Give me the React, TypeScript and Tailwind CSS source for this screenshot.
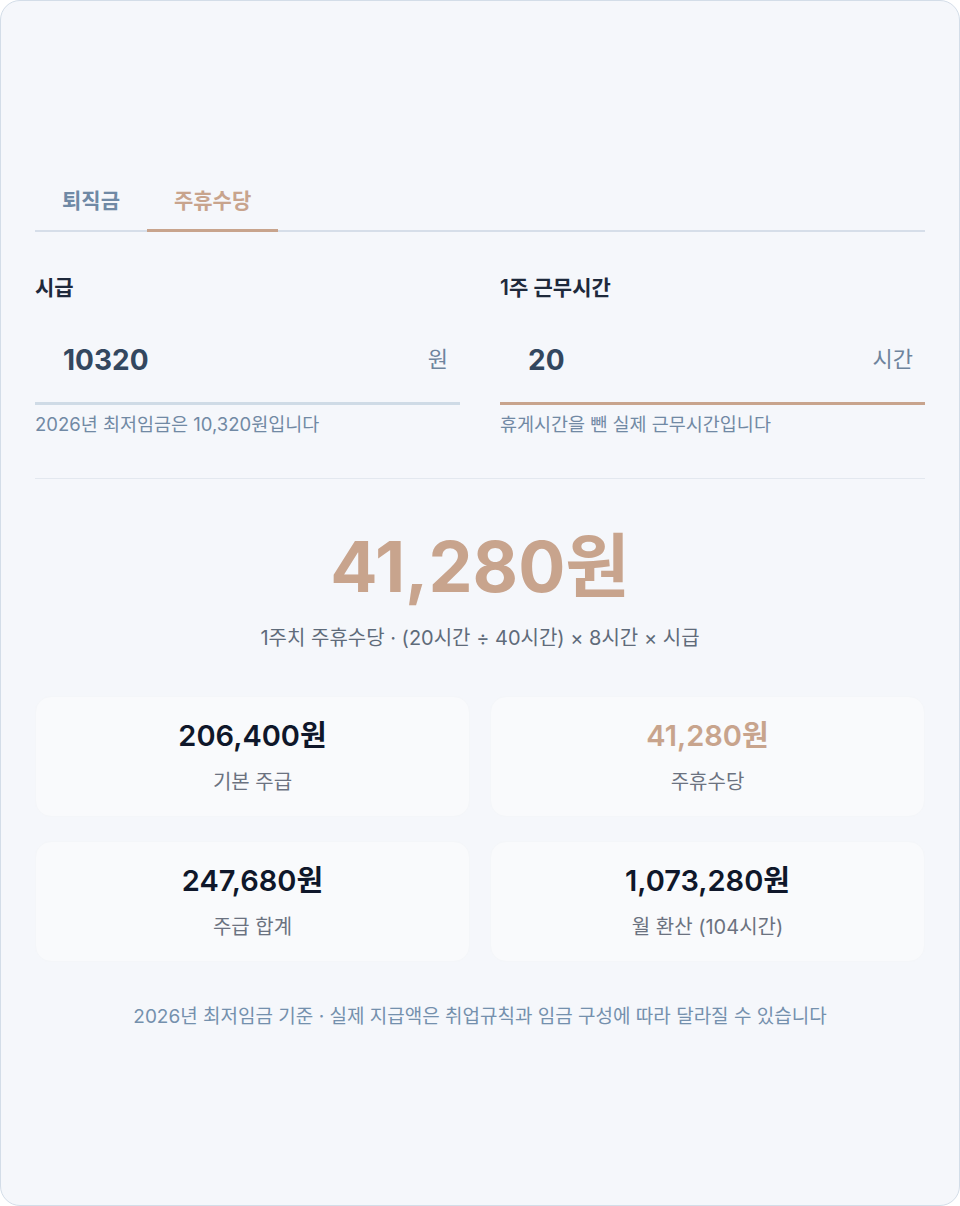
import { useState } from "react";

const font = { fontFamily: "Inter, 'Noto Sans CJK KR', sans-serif" };

function Field({
  label,
  value,
  unit,
  hint,
  active,
}: {
  label: string;
  value: string;
  unit: string;
  hint: string;
  active?: boolean;
}) {
  return (
    <div className="flex flex-col">
      <div className="text-[21px] font-semibold leading-7 text-[#1e293b]">{label}</div>
      <div
        className={`mt-[21px] flex h-[82px] items-center justify-between border-b-[3px] pb-[6px] pl-7 pr-3 ${active ? "border-[#c8a48d]" : "border-[#cfdbe6]"}`}
      >
        <span className="text-[28px] font-bold text-[#33475f]">{value}</span>
        <span className="text-[22px] text-[#6e849d]">{unit}</span>
      </div>
      <div className="mt-[6px] text-[18.5px] leading-[26px] text-[#7189a4]">{hint}</div>
    </div>
  );
}

function Stat({ value, label, accent }: { value: string; label: string; accent?: boolean }) {
  return (
    <div className="flex h-[121px] flex-col items-center justify-center rounded-2xl border border-[#f4f6f9] bg-[#f9fafc]">
      <div className={`text-[29px] font-semibold leading-9 ${accent ? "text-[#c8a48d]" : "text-[#0f172a]"}`}>
        {value}
      </div>
      <div className="mt-[14px] text-[20px] leading-7 text-[#6b7280]">{label}</div>
    </div>
  );
}

export default function App() {
  const [tab, setTab] = useState(1);
  const tabs = ["퇴직금", "주휴수당"];

  return (
    <div style={font} className="h-[1206px] w-[960px] bg-white">
      <div className="h-full w-full rounded-[20px] border border-[#d3dde8] bg-[#f5f7fb] px-[34px] pt-[184px]">
        <div className="flex border-b-2 border-[#d6dee9]">
          {tabs.map((t, i) => (
            <button
              key={t}
              onClick={() => setTab(i)}
              className={`-mb-[2px] border-b-[3px] px-[27px] pb-[12px] text-[21px] font-semibold leading-8 ${tab === i ? "border-[#c8a48d] text-[#c8a48d]" : "border-transparent text-[#6f89a5]"}`}
            >
              {t}
            </button>
          ))}
        </div>

        <div className="mt-[42px] grid grid-cols-2 gap-10">
          <Field label="시급" value="10320" unit="원" hint="2026년 최저임금은 10,320원입니다" />
          <Field
            label="1주 근무시간"
            value="20"
            unit="시간"
            hint="휴게시간을 뺀 실제 근무시간입니다"
            active
          />
        </div>

        <div className="mt-[41px] border-t border-[#e3e8ef]" />

        <div className="mt-[44px] flex flex-col items-center">
          <div className="text-[70px] font-bold leading-[88px] text-[#c8a48d]">41,280원</div>
          <div className="mt-[13px] text-[20px] leading-7 text-[#5f6b7a]">
            1주치 주휴수당 · (20시간 ÷ 40시간) × 8시간 × 시급
          </div>
        </div>

        <div className="mt-[44px] grid grid-cols-2 gap-x-5 gap-y-6">
          <Stat value="206,400원" label="기본 주급" />
          <Stat value="41,280원" label="주휴수당" accent />
          <Stat value="247,680원" label="주급 합계" />
          <Stat value="1,073,280원" label="월 환산 (104시간)" />
        </div>

        <div className="mt-[41px] text-center text-[19px] leading-7 text-[#7490ad]">
          2026년 최저임금 기준 · 실제 지급액은 취업규칙과 임금 구성에 따라 달라질 수 있습니다
        </div>
      </div>
    </div>
  );
}
